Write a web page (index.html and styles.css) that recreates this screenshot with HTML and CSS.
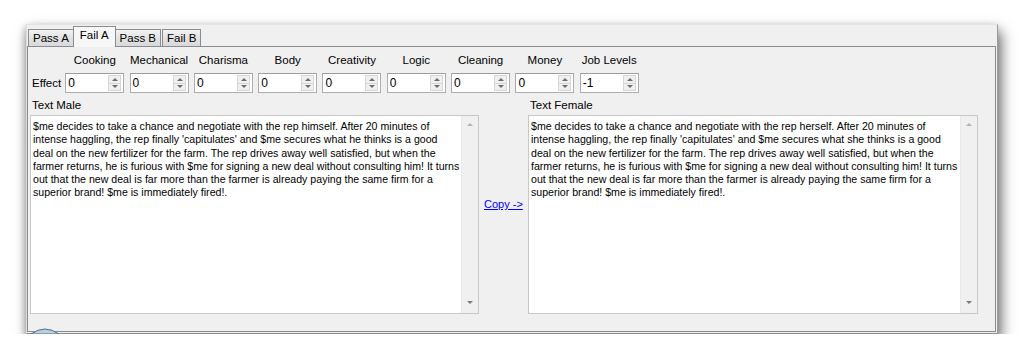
FILE: index.html
```html
<!DOCTYPE html>
<html lang="en">
<head>
    <meta charset="UTF-8">
    <title>Fail A</title>
    <link rel="stylesheet" href="styles.css">
</head>
<body>

<!-- window -->
<div class="window">
    <div class="tabs">
        <div class="tab">Pass A</div>
        <div class="tab active">Fail A</div>
        <div class="tab">Pass B</div>
        <div class="tab">Fail B</div>
    </div>

    <div class="page">
        <!-- effect spinners -->
        <div class="effects">
            <span></span>
            <span class="col-label">Cooking</span>
            <span class="col-label">Mechanical</span>
            <span class="col-label">Charisma</span>
            <span class="col-label">Body</span>
            <span class="col-label">Creativity</span>
            <span class="col-label">Logic</span>
            <span class="col-label">Cleaning</span>
            <span class="col-label">Money</span>
            <span class="col-label">Job Levels</span>

            <span class="row-label">Effect</span>
            <div class="spin"><span class="val">0</span><span class="btns"><i class="up"></i><i class="down"></i></span></div>
            <div class="spin"><span class="val">0</span><span class="btns"><i class="up"></i><i class="down"></i></span></div>
            <div class="spin"><span class="val">0</span><span class="btns"><i class="up"></i><i class="down"></i></span></div>
            <div class="spin"><span class="val">0</span><span class="btns"><i class="up"></i><i class="down"></i></span></div>
            <div class="spin"><span class="val">0</span><span class="btns"><i class="up"></i><i class="down"></i></span></div>
            <div class="spin"><span class="val">0</span><span class="btns"><i class="up"></i><i class="down"></i></span></div>
            <div class="spin"><span class="val">0</span><span class="btns"><i class="up"></i><i class="down"></i></span></div>
            <div class="spin"><span class="val">0</span><span class="btns"><i class="up"></i><i class="down"></i></span></div>
            <div class="spin"><span class="val">-1</span><span class="btns"><i class="up"></i><i class="down"></i></span></div>
        </div>

        <!-- text boxes -->
        <div class="texts">
            <span class="text-label">Text Male</span>
            <span></span>
            <span class="text-label">Text Female</span>

            <div class="textbox">
                <div class="content">$me decides to take a chance and negotiate with the rep himself. After 20 minutes of<br>intense haggling, the rep finally 'capitulates' and $me secures what he thinks is a good<br>deal on the new fertilizer for the farm. The rep drives away well satisfied, but when the<br>farmer returns, he is furious with $me for signing a new deal without consulting him! It turns<br>out that the new deal is far more than the farmer is already paying the same firm for a<br>superior brand! $me is immediately fired!.</div>
                <div class="scrollbar"><i class="arr-up"></i><i class="arr-down"></i></div>
            </div>

            <div class="copy-cell"><a href="#" class="copy-link">Copy -&gt;</a></div>

            <div class="textbox">
                <div class="content">$me decides to take a chance and negotiate with the rep herself. After 20 minutes of<br>intense haggling, the rep finally 'capitulates' and $me secures what she thinks is a good<br>deal on the new fertilizer for the farm. The rep drives away well satisfied, but when the<br>farmer returns, he is furious with $me for signing a new deal without consulting him! It turns<br>out that the new deal is far more than the farmer is already paying the same firm for a<br>superior brand! $me is immediately fired!.</div>
                <div class="scrollbar"><i class="arr-up"></i><i class="arr-down"></i></div>
            </div>
        </div>
    </div>

    <!-- start orb peeking in at the bottom -->
    <svg class="orb" width="30" height="8" viewBox="0 0 30 8">
        <path d="M1 8 Q15 -2 29 8 Z" fill="#b9cfe2" stroke="#5a6d80" stroke-width="1"/>
    </svg>
</div>

</body>
</html>
```

FILE: styles.css
```css
body {
    margin: 0;
    padding: 0;
    background-color: #fff;
    font-family: "Liberation Sans", Arial, sans-serif;
    font-size: 11px;
    color: #000;
}

.window {
    position: relative;
    margin: 24px 0 0 26px;
    width: 970px;
    height: 308px;
    background-color: #f0f0f0;
    border-top: 1px solid #e4e4e4;
    border-left: 1px solid #dcdcdc;
    border-right: 1px solid #9a9a9a;
    border-bottom: 1px solid #8c8c8c;
    box-shadow: 3px 7px 13px rgba(0, 0, 0, 0.6), -2px 2px 6px rgba(0, 0, 0, 0.15);
}

.tabs {
    display: flex;
    align-items: flex-end;
    height: 21px;
    padding-left: 1px;
}

.tab {
    height: 16px;
    line-height: 16px;
    padding: 0 4px;
    margin-right: 1px;
    border: 1px solid #898c95;
    border-bottom: none;
    background: linear-gradient(#f2f2f2, #e3e3e3 50%, #d9d9d9);
    font-size: 11.5px;
}

.tab.active {
    position: relative;
    height: 20px;
    line-height: 17px;
    margin: 0 -1px -1px -2px;
    padding: 0 6px;
    background: #f7f7f7;
    z-index: 1;
}

.page {
    height: 284px;
    width: 967px;
    border: 1px solid #898c95;
    background-color: #f0f0f0;
}

.effects {
    display: grid;
    grid-template-columns: 28px repeat(9, 59px);
    column-gap: 5.3px;
    row-gap: 6px;
    padding: 7px 0 0 4px;
}

.col-label {
    text-align: center;
    line-height: 13px;
    white-space: nowrap;
    font-size: 11.5px;
}

.row-label {
    line-height: 20px;
    white-space: nowrap;
    font-size: 11.5px;
}

.spin {
    display: flex;
    height: 18px;
    border: 1px solid #abadb3;
    border-top-color: #9c9ea4;
    background-color: #fff;
}

.val {
    flex-grow: 1;
    padding-left: 2px;
    line-height: 18px;
    font-size: 12px;
}

.btns {
    display: flex;
    flex-direction: column;
    width: 13px;
    margin: 1px 2px 1px 0;
}

.btns i {
    flex-grow: 1;
    position: relative;
    border: 1px solid #d6d6d6;
    background-color: #f0f0f0;
}

.btns i + i {
    border-top: none;
}

.btns i::after {
    content: "";
    position: absolute;
    left: 3px;
    top: 2px;
    border-left: 3px solid transparent;
    border-right: 3px solid transparent;
}

.btns .up::after {
    border-bottom: 3px solid #6d6d6d;
}

.btns .down::after {
    top: 1px;
    border-top: 3px solid #6d6d6d;
}

.texts {
    display: grid;
    grid-template-columns: 449px 49px 450px;
    grid-template-rows: 14px 199px;
    row-gap: 2px;
    padding: 6px 0 0 2px;
}

.text-label {
    padding-left: 2px;
    line-height: 13px;
    white-space: nowrap;
    font-size: 11.5px;
}

.textbox {
    display: flex;
    border: 1px solid #c8c8c8;
    background-color: #fff;
}

.content {
    flex-grow: 1;
    padding: 4px 0 0 2px;
    font-size: 10.6px;
    line-height: 13.3px;
    white-space: nowrap;
    overflow: hidden;
}

.scrollbar {
    position: relative;
    width: 16px;
    background-color: #f0f0f0;
    border-left: 1px solid #e8e8e8;
}

.scrollbar i {
    position: absolute;
    left: 5px;
    border-left: 3px solid transparent;
    border-right: 3px solid transparent;
}

.arr-up {
    top: 7px;
    border-bottom: 3px solid #b4b4b4;
}

.arr-down {
    bottom: 9px;
    border-top: 3px solid #7a7a7a;
}

.copy-cell {
    padding: 83px 0 0 5px;
}

.copy-link {
    color: #0000ff;
    font-size: 11px;
}

.orb {
    position: absolute;
    left: 3px;
    bottom: -1px;
    display: block;
}
```
